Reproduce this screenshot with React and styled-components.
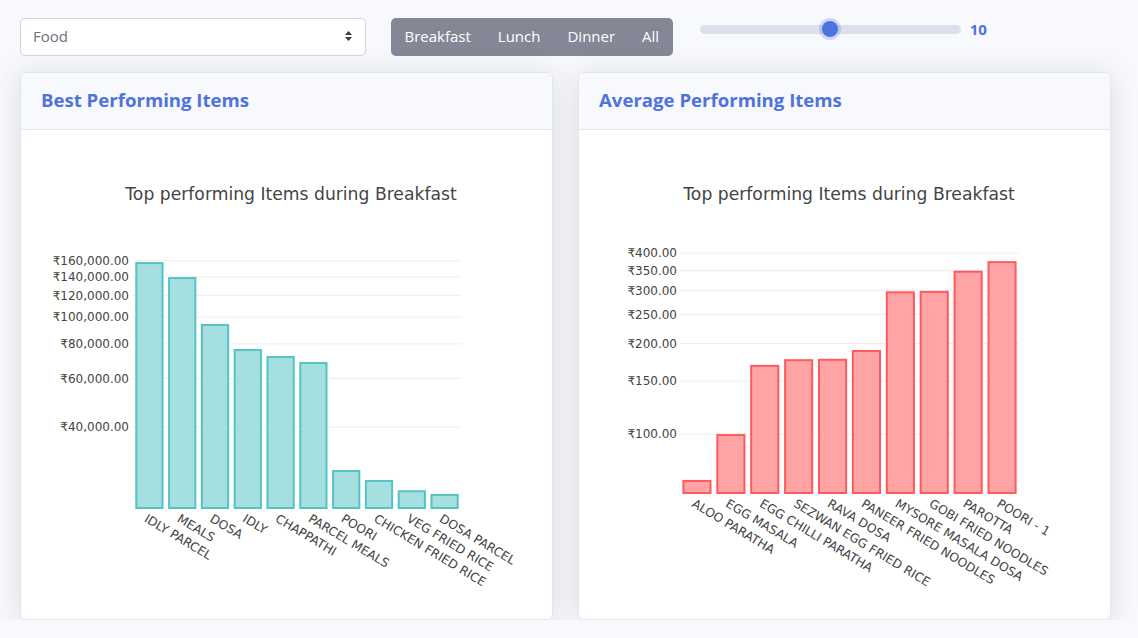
import React from "react";
import styled, { createGlobalStyle } from "styled-components";

const GlobalStyle = createGlobalStyle`
  body {
    margin: 0;
    background: #f8f9fc;
    font-family: "Open Sans", "Noto Sans", Arial, sans-serif;
  }
`;

const bestItems = [
  { name: "IDLY PARCEL", value: 157000 },
  { name: "MEALS", value: 138600 },
  { name: "DOSA", value: 93700 },
  { name: "IDLY", value: 76000 },
  { name: "CHAPPATHI", value: 71700 },
  { name: "PARCEL MEALS", value: 68200 },
  { name: "POORI", value: 27700 },
  { name: "CHICKEN FRIED RICE", value: 25500 },
  { name: "VEG FRIED RICE", value: 23400 },
  { name: "DOSA PARCEL", value: 22700 },
];

const avgItems = [
  { name: "ALOO PARATHA", value: 69.8 },
  { name: "EGG MASALA", value: 99.2 },
  { name: "EGG CHILLI PARATHA", value: 168.5 },
  { name: "SEZWAN EGG FRIED RICE", value: 176 },
  { name: "RAVA DOSA", value: 176.6 },
  { name: "PANEER FRIED NOODLES", value: 188.9 },
  { name: "MYSORE MASALA DOSA", value: 296 },
  { name: "GOBI FRIED NOODLES", value: 297 },
  { name: "PAROTTA", value: 346.7 },
  { name: "POORI - 1", value: 373 },
];

const bestChart = {
  x0: 112,
  x1: 440,
  bottom: 378,
  refValue: 40000,
  refY: 297,
  perDecade: 276,
  labelRight: 108,
  ticks: [40000, 60000, 80000, 100000, 120000, 140000, 160000],
  fill: "#a6dfdf",
  stroke: "#55c3c3",
};

const avgChart = {
  x0: 101,
  x1: 440,
  bottom: 363,
  refValue: 100,
  refY: 304,
  perDecade: 300.6,
  labelRight: 98,
  ticks: [100, 150, 200, 250, 300, 350, 400],
  fill: "#ffa4a4",
  stroke: "#ff5a5e",
};

const money = (v) =>
  "₹" +
  v.toLocaleString("en-US", {
    minimumFractionDigits: 2,
    maximumFractionDigits: 2,
  });

function BarChart({ items, config, title }) {
  const { x0, x1, bottom, refValue, refY, perDecade, labelRight, ticks } =
    config;
  const yOf = (v) => refY - (Math.log10(v) - Math.log10(refValue)) * perDecade;
  const slot = (x1 - x0) / items.length;
  const barW = slot * 0.8;

  return (
    <ChartSvg width="531" height="488" viewBox="0 0 531 488">
      <ChartTitle x="270" y="70" textAnchor="middle">
        {title}
      </ChartTitle>
      {ticks.map((t) => (
        <g key={t}>
          <line x1={x0} x2={x1} y1={yOf(t)} y2={yOf(t)} stroke="#eeeeee" />
          <TickText x={labelRight} y={yOf(t)} dy="0.35em" textAnchor="end">
            {money(t)}
          </TickText>
        </g>
      ))}
      {items.map((item, i) => {
        const cx = x0 + slot * i + slot / 2;
        const top = yOf(item.value);
        return (
          <g key={item.name}>
            <rect
              x={cx - barW / 2}
              y={top}
              width={barW}
              height={bottom - top}
              fill={config.fill}
              stroke={config.stroke}
              strokeWidth="2"
            />
            <LabelText
              x={cx - 6}
              y={bottom + 13}
              transform={`rotate(31 ${cx - 6} ${bottom + 13})`}
            >
              {item.name}
            </LabelText>
          </g>
        );
      })}
    </ChartSvg>
  );
}

function SortIcon() {
  return (
    <svg width="9" height="12" viewBox="0 0 9 12">
      <path d="M4.5 1 L8 5 H1 Z" fill="#3a3b45" />
      <path d="M4.5 11 L8 7 H1 Z" fill="#3a3b45" />
    </svg>
  );
}

export default function App() {
  const meals = ["Breakfast", "Lunch", "Dinner", "All"];
  const sliderPct = 50;

  return (
    <>
      <GlobalStyle />
      <Page>
        <Toolbar>
          <Select>
            <span>Food</span>
            <SortIcon />
          </Select>
          <ButtonGroup>
            {meals.map((m) => (
              <GroupButton key={m}>{m}</GroupButton>
            ))}
          </ButtonGroup>
          <SliderWrap>
            <Track>
              <Thumb style={{ left: `${sliderPct}%` }} />
            </Track>
            <SliderValue>10</SliderValue>
          </SliderWrap>
        </Toolbar>

        <CardsRow>
          <Card>
            <CardHeader>
              <CardTitle>Best Performing Items</CardTitle>
            </CardHeader>
            <BarChart
              items={bestItems}
              config={bestChart}
              title="Top performing Items during Breakfast"
            />
          </Card>
          <Card>
            <CardHeader>
              <CardTitle>Average Performing Items</CardTitle>
            </CardHeader>
            <BarChart
              items={avgItems}
              config={avgChart}
              title="Top performing Items during Breakfast"
            />
          </Card>
        </CardsRow>
      </Page>
    </>
  );
}

const Page = styled.div`
  padding: 18px 0 0 20px;
`;

const Toolbar = styled.div`
  display: flex;
  align-items: center;
  height: 38px;
`;

const Select = styled.div`
  box-sizing: border-box;
  width: 346px;
  height: 38px;
  display: flex;
  align-items: center;
  justify-content: space-between;
  padding: 0 12px 2px 12px;
  background: #fff;
  border: 1px solid #d1d3e2;
  border-radius: 5px;
  color: #6e707e;
  font-size: 15px;
`;

const ButtonGroup = styled.div`
  margin-left: 25px;
  display: flex;
  height: 38px;
  background: #858796;
  border-radius: 5px;
`;

const GroupButton = styled.div`
  display: flex;
  align-items: center;
  padding: 0 13.5px 2px;
  color: #fff;
  font-size: 15px;
`;

const SliderWrap = styled.div`
  margin-left: 27px;
  display: flex;
  align-items: center;
  margin-top: -16px;
`;

const Track = styled.div`
  position: relative;
  width: 261px;
  height: 9px;
  border-radius: 5px;
  background: #dddfeb;
`;

const Thumb = styled.div`
  position: absolute;
  top: 50%;
  width: 16px;
  height: 16px;
  border-radius: 50%;
  background: #4e73df;
  box-shadow: 0 0 0 3px rgba(78, 115, 223, 0.25);
  transform: translate(-50%, -50%);
`;

const SliderValue = styled.span`
  margin-left: 9px;
  color: #4e73df;
  font-weight: 700;
  font-size: 15px;
`;

const CardsRow = styled.div`
  display: flex;
  gap: 25px;
  margin-top: 16px;
`;

const Card = styled.div`
  box-sizing: border-box;
  width: 533px;
  height: 548px;
  background: #fff;
  border: 1px solid #e3e6f0;
  border-radius: 6px;
  box-shadow: 0 0.15rem 1.75rem 0 rgba(58, 59, 69, 0.15);
  overflow: hidden;
`;

const CardHeader = styled.div`
  height: 56px;
  display: flex;
  align-items: center;
  padding: 0 20px 3px;
  box-sizing: border-box;
  height: 57px;
  background: #f8f9fc;
  border-bottom: 1px solid #e3e6f0;
`;

const CardTitle = styled.h6`
  margin: 0;
  color: #4e73df;
  font-size: 18.6px;
  font-weight: 700;
`;

const ChartSvg = styled.svg`
  display: block;
`;

const ChartTitle = styled.text`
  font-family: "DejaVu Sans", Verdana, sans-serif;
  font-size: 17.2px;
  fill: #444;
`;

const TickText = styled.text`
  font-family: "DejaVu Sans", Verdana, sans-serif;
  font-size: 12px;
  fill: #444;
`;

const LabelText = styled.text`
  font-family: "DejaVu Sans", Verdana, sans-serif;
  font-size: 12.3px;
  fill: #444;
`;
